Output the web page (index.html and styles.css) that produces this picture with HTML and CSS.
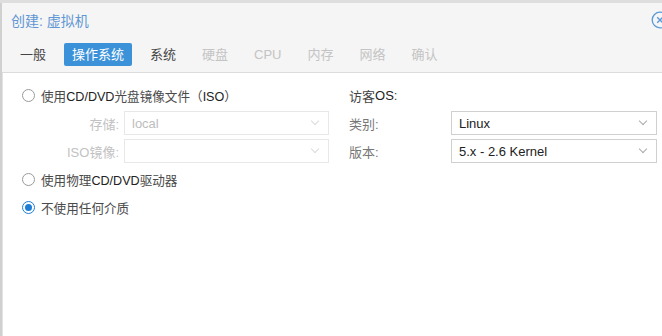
FILE: index.html
```html
<!DOCTYPE html>
<html lang="zh-CN">
<head>
    <meta charset="UTF-8">
    <title>创建: 虚拟机</title>
    <link rel="stylesheet" href="styles.css">
</head>
<body>
    <div class="window">
        <div class="window-header">
            <span class="window-title">创建: 虚拟机</span>
            <svg class="close-icon" width="18" height="18" viewBox="0 0 18 18" fill="none" stroke="#5b9ad8" stroke-width="1.3">
                <circle cx="9" cy="9" r="7.8"></circle>
                <path d="M6.2 6.2l5.6 5.6M11.8 6.2l-5.6 5.6"></path>
            </svg>
        </div>
        <div class="tabs">
            <span class="tab">一般</span>
            <span class="tab active">操作系统</span>
            <span class="tab">系统</span>
            <span class="tab disabled">硬盘</span>
            <span class="tab disabled">CPU</span>
            <span class="tab disabled">内存</span>
            <span class="tab disabled">网络</span>
            <span class="tab disabled">确认</span>
        </div>
        <div class="panel">
            <div class="column">
                <label class="row radio-row">
                    <span class="radio"></span>
                    <span>使用<b>CD/DVD</b>光盘镜像文件（<b>ISO</b>）</span>
                </label>
                <div class="row field disabled">
                    <span class="field-label">存储:</span>
                    <div class="select">
                        <span>local</span>
                        <span class="chevron"></span>
                    </div>
                </div>
                <div class="row field disabled">
                    <span class="field-label">ISO镜像:</span>
                    <div class="select">
                        <span></span>
                        <span class="chevron"></span>
                    </div>
                </div>
                <label class="row radio-row">
                    <span class="radio"></span>
                    <span>使用物理<b>CD/DVD</b>驱动器</span>
                </label>
                <label class="row radio-row">
                    <span class="radio checked"></span>
                    <span>不使用任何介质</span>
                </label>
            </div>
            <div class="column">
                <div class="row heading">访客<b>OS</b>:</div>
                <div class="row field right">
                    <span class="field-label">类别:</span>
                    <div class="select">
                        <span>Linux</span>
                        <span class="chevron"></span>
                    </div>
                </div>
                <div class="row field right">
                    <span class="field-label">版本:</span>
                    <div class="select">
                        <span>5.x - 2.6 Kernel</span>
                        <span class="chevron"></span>
                    </div>
                </div>
            </div>
        </div>
    </div>
</body>
</html>
```

FILE: styles.css
```css
html, body {
    margin: 0;
    padding: 0;
    height: 100%;
    overflow: hidden;
}
body {
    font-family: 'Liberation Sans', 'Noto Sans CJK SC', sans-serif;
    font-size: 13px;
    color: #404040;
    background: #dedede;
    padding-top: 3px;
    box-sizing: border-box;
}
b {
    font-weight: normal;
    color: #222;
}
.window {
    height: 100%;
    display: flex;
    flex-direction: column;
    background: #f5f5f5;
    border-left: 2px solid #d0d0d0;
}
.window-header {
    height: 34px;
    display: flex;
    align-items: center;
    justify-content: space-between;
    padding-left: 9px;
}
.window-title {
    font-size: 14px;
    color: #5f97d4;
}
.close-icon {
    display: block;
    flex-shrink: 0;
    margin-right: -7px;
}
.tabs {
    height: 35px;
    display: flex;
    align-items: center;
    gap: 10px;
    padding-left: 10px;
    border-bottom: 1px solid #dcdcdc;
}
.tab {
    height: 23px;
    line-height: 23px;
    padding: 0 8px;
    border-radius: 2px;
    color: #444;
}
.tab.active {
    background: #3b92d9;
    color: #fff;
}
.tab.disabled {
    color: #c4c4c4;
}
.panel {
    flex: 1;
    background: #fff;
    border-left: 1px solid #e2e2e2;
    display: grid;
    grid-template-columns: 308px 308px;
    column-gap: 20px;
    align-content: start;
    padding: 10px 0 0 18px;
}
.column {
    display: flex;
    flex-direction: column;
    gap: 4px;
}
.row {
    height: 24px;
    display: flex;
    align-items: center;
}
.radio-row {
    gap: 6px;
    color: #4a4a4a;
    font-size: 12.6px;
}
.radio {
    width: 13px;
    height: 13px;
    border: 1px solid #9a9a9a;
    border-radius: 50%;
    box-sizing: border-box;
    margin-left: 1px;
    background: #fff;
    position: relative;
}
.radio.checked {
    border-color: #1f7ed4;
}
.radio.checked::after {
    content: "";
    position: absolute;
    left: 2px;
    top: 2px;
    width: 7px;
    height: 7px;
    border-radius: 50%;
    background: #1f7ed4;
}
.field-label {
    width: 98px;
    padding-right: 5px;
    text-align: right;
    color: #777;
}
.field.right .field-label {
    width: 102px;
    padding-right: 0;
    text-align: left;
}
.field.disabled .field-label {
    color: #c2c2c2;
}
.select {
    flex: 1;
    height: 24px;
    box-sizing: border-box;
    border: 1px solid #d0d0d0;
    background: #fff;
    display: flex;
    align-items: center;
    justify-content: space-between;
    padding: 0 10px 0 7px;
    color: #222;
}
.field.disabled .select {
    border-color: #e8e8e8;
    color: #bdbdbd;
}
.chevron {
    width: 5px;
    height: 5px;
    border-right: 1px solid #aaa;
    border-bottom: 1px solid #aaa;
    transform: rotate(45deg);
    margin-top: -4px;
}
.field.disabled .chevron {
    border-color: #dadada;
}
.heading {
    color: #444;
}
```
